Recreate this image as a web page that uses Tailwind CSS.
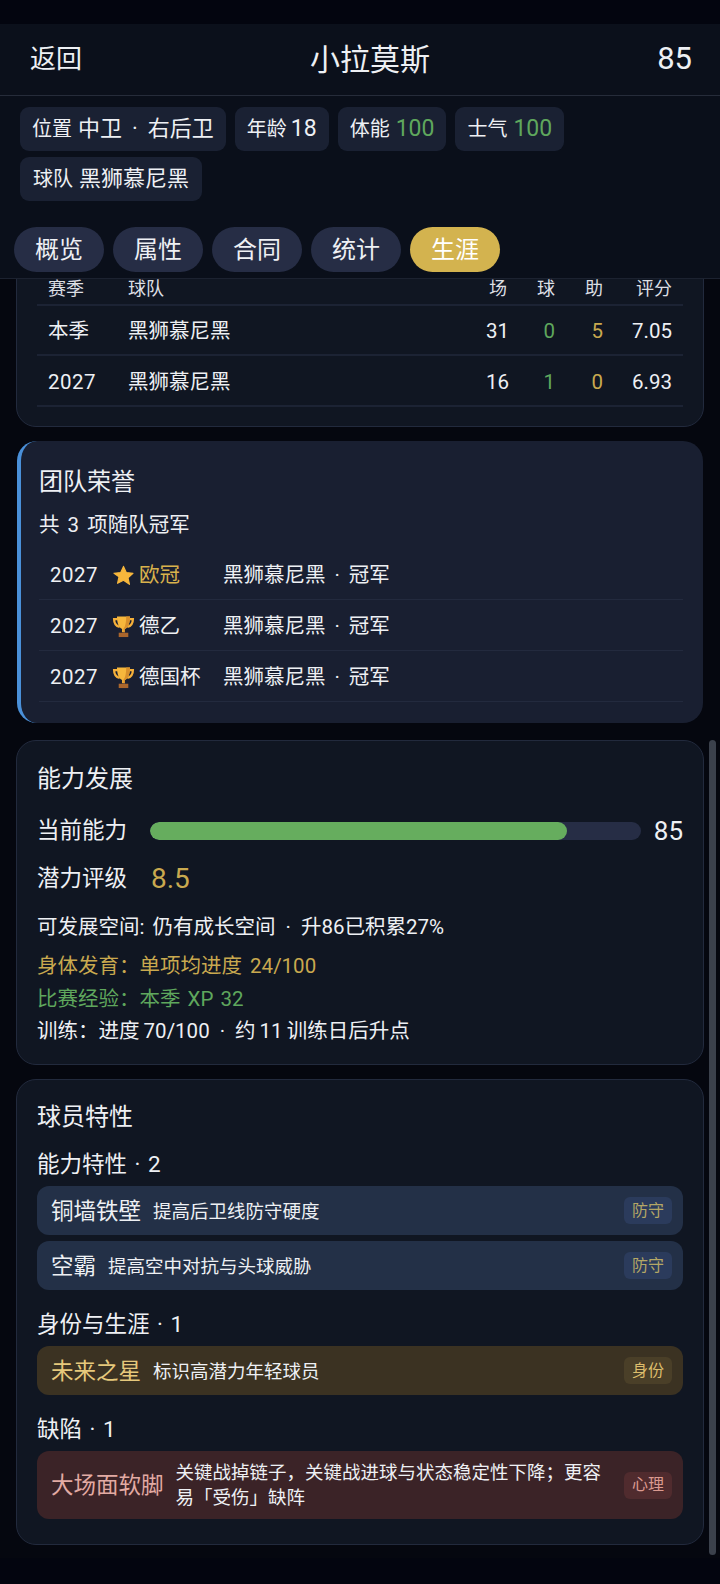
<!DOCTYPE html>
<html lang="zh-CN">
<head>
    <meta charset="UTF-8">
    <meta name="viewport" content="width=device-width, initial-scale=1.0">
    <title>小拉莫斯</title>
    <script src="https://cdn.jsdelivr.net/npm/@tailwindcss/browser@4"></script>
</head>
<body class="bg-[#05070f] text-[#eef0f4] font-['Roboto','Noto_Sans_CJK_SC',sans-serif] font-normal w-[720px] h-[1584px] overflow-hidden flex flex-col relative">

    <div class="h-[24px] shrink-0 bg-[#03050f]"></div>

    <header class="h-[72px] shrink-0 bg-[#0b101b] border-b border-[#262c3a] pl-[30px] pr-[28px] flex items-center justify-between">
        <span class="text-[26px] w-[80px]">返回</span>
        <span class="text-[30px]">小拉莫斯</span>
        <span class="text-[31px] w-[62px] text-right">85</span>
    </header>

    <section class="h-[183px] shrink-0 bg-[#0a0f1a] border-b border-[#1c2230] relative">
        <div class="flex flex-wrap gap-x-[9px] gap-y-[6px] px-[20px] pt-[11px] text-[20px] leading-[28px]">
            <span class="h-[44px] px-[12px] flex items-center rounded-[9px] bg-[#1a2133] gap-[6px]">位置 <b class="font-normal text-[22px]">中卫<span class="mx-[10px]">·</span>右后卫</b></span>
            <span class="h-[44px] px-[12px] flex items-center rounded-[9px] bg-[#1a2133] gap-[4px]">年龄 <b class="font-normal text-[23px]">18</b></span>
            <span class="h-[44px] px-[12px] flex items-center rounded-[9px] bg-[#1a2133] gap-[6px]">体能 <b class="font-normal text-[#5fa75d] text-[23px]">100</b></span>
            <span class="h-[44px] px-[12px] flex items-center rounded-[9px] bg-[#1a2133] gap-[6px]">士气 <b class="font-normal text-[#5fa75d] text-[23px]">100</b></span>
            <span class="h-[44px] px-[13px] flex items-center rounded-[9px] bg-[#1a2133] gap-[6px]">球队 <b class="font-normal text-[22px]">黑狮慕尼黑</b></span>
        </div>
        <nav class="flex gap-[9px] px-[14px] mt-[26px] text-[24px]">
            <span class="w-[90px] h-[45px] flex items-center justify-center rounded-full bg-[#262d45]">概览</span>
            <span class="w-[90px] h-[45px] flex items-center justify-center rounded-full bg-[#262d45]">属性</span>
            <span class="w-[90px] h-[45px] flex items-center justify-center rounded-full bg-[#262d45]">合同</span>
            <span class="w-[90px] h-[45px] flex items-center justify-center rounded-full bg-[#262d45]">统计</span>
            <span class="w-[90px] h-[45px] flex items-center justify-center rounded-full bg-[#d3b34f] text-white">生涯</span>
        </nav>
    </section>

    <main class="h-[1279px] shrink-0 overflow-hidden px-[16px]">
        <!-- career table, scrolled partly under the tabs -->
        <section class="-mt-[40px] h-[188px] border border-[#222a3d] rounded-[20px] bg-[#101622] px-[20px] pt-[34px]">
            <div class="grid grid-cols-[80px_1fr_48px_48px_48px_69px] h-[32px] pb-[2px] px-[11px] items-center border-b-2 border-[#1c2334] text-[18px] text-[#dcdfe4]">
                <span>赛季</span><span>球队</span><span class="text-right">场</span><span class="text-right">球</span><span class="text-right">助</span><span class="text-right">评分</span>
            </div>
            <div class="grid grid-cols-[80px_1fr_48px_48px_48px_69px] h-[50px] pt-[2px] px-[11px] items-center border-b-2 border-[#1c2334] text-[20.5px]">
                <span>本季</span><span>黑狮慕尼黑</span><span class="text-right -mr-[2px]">31</span><span class="text-right text-[#5fa75d]">0</span><span class="text-right text-[#c9a94f]">5</span><span class="text-right">7.05</span>
            </div>
            <div class="grid grid-cols-[80px_1fr_48px_48px_48px_69px] h-[51px] pt-[4px] px-[11px] items-center border-b-2 border-[#1c2334] text-[20.5px]">
                <span class="tracking-[0.5px]">2027</span><span>黑狮慕尼黑</span><span class="text-right -mr-[2px]">16</span><span class="text-right text-[#5fa75d]">1</span><span class="text-right text-[#c9a94f]">0</span><span class="text-right">6.93</span>
            </div>
        </section>

        <!-- team honours -->
        <section class="mt-[14px] h-[282px] ml-px mr-px rounded-[20px] border-l-4 border-[#4a90d9] bg-[#191f31] pl-[18px] pr-[20px] pt-[24px]">
            <h2 class="text-[24px] leading-[34px] font-normal">团队荣誉</h2>
            <p class="text-[20.5px] leading-[28px] mt-[12px] [word-spacing:3px]">共 3 项随队冠军</p>
            <div class="mt-[10px]">
                <div class="h-[51px] pt-[2px] flex items-center pl-[11px] border-b border-[#232a3e] text-[20.5px]">
                    <span class="w-[63px] tracking-[0.5px]">2027</span>
                    <svg class="w-[23px] h-[23px] mr-[4px] -ml-[1px]" viewBox="0 0 24 24"><path fill="#f7b73c" stroke="#f7b73c" stroke-width="1.200" stroke-linejoin="round" d="M12 2.500l2.900 6.400 7 .7-5.200 4.700 1.500 6.900L12 17l-6.200 3.200 1.500-6.900L2.100 9.600l7-.7z"/></svg>
                    <span class="w-[84px] text-[#d9b24c]">欧冠</span>
                    <span>黑狮慕尼黑<span class="mx-[9px]">·</span>冠军</span>
                </div>
                <div class="h-[51px] pt-[2px] flex items-center pl-[11px] border-b border-[#232a3e] text-[20.5px]">
                    <span class="w-[63px] tracking-[0.5px]">2027</span>
                    <svg class="w-[23px] h-[23px] mr-[4px] -ml-[1px]" viewBox="0 0 24 24"><path fill="none" stroke="#f5b03a" stroke-width="2.400" d="M6 4.200H2.200c0 4.300 1.800 7.300 5.800 8.300M18 4.200h3.800c0 4.300-1.800 7.300-5.800 8.300"/><path fill="#f7b73c" d="M5.200 1.500h13.600c0 6.500-1.700 11.500-5.300 13V18h-3v-3.500C6.900 13 5.200 8 5.200 1.500z"/><path fill="#d98f2b" d="M14.800 1.500h4c0 6.500-1.700 11.500-5.300 13V18H12v-4c2-2 2.800-6 2.800-12.500z"/><path fill="#a9652c" d="M7 18.500h10V23H7z"/></svg>
                    <span class="w-[84px]">德乙</span>
                    <span>黑狮慕尼黑<span class="mx-[9px]">·</span>冠军</span>
                </div>
                <div class="h-[51px] pt-[2px] flex items-center pl-[11px] border-b border-[#232a3e] text-[20.5px]">
                    <span class="w-[63px] tracking-[0.5px]">2027</span>
                    <svg class="w-[23px] h-[23px] mr-[4px] -ml-[1px]" viewBox="0 0 24 24"><path fill="none" stroke="#f5b03a" stroke-width="2.400" d="M6 4.200H2.200c0 4.300 1.800 7.300 5.800 8.300M18 4.200h3.800c0 4.300-1.800 7.300-5.800 8.300"/><path fill="#f7b73c" d="M5.200 1.500h13.600c0 6.500-1.700 11.500-5.300 13V18h-3v-3.500C6.900 13 5.200 8 5.200 1.500z"/><path fill="#d98f2b" d="M14.800 1.500h4c0 6.500-1.700 11.500-5.300 13V18H12v-4c2-2 2.800-6 2.800-12.500z"/><path fill="#a9652c" d="M7 18.500h10V23H7z"/></svg>
                    <span class="w-[84px]">德国杯</span>
                    <span>黑狮慕尼黑<span class="mx-[9px]">·</span>冠军</span>
                </div>
            </div>
        </section>

        <!-- ability -->
        <section class="mt-[17px] h-[325px] border border-[#222a3d] rounded-[20px] bg-[#101622] px-[20px] pt-[21px]">
            <h2 class="text-[24px] leading-[34px] font-normal">能力发展</h2>
            <div class="flex items-center mt-[18px] h-[34px]">
                <span class="text-[22.5px] w-[113px]">当前能力</span>
                <div class="w-[491px] h-[18px] rounded-full bg-[#262d45] overflow-hidden">
                    <div class="h-full rounded-full bg-[#66ad5e]" style="width: 85%"></div>
                </div>
                <span class="text-[26px] flex-1 text-right">85</span>
            </div>
            <div class="flex items-center mt-[14px] h-[34px]">
                <span class="text-[22.5px] w-[114px]">潜力评级</span>
                <span class="text-[28px] text-[#c9a94f]">8.5</span>
            </div>
            <p class="text-[20.5px] leading-[28px] mt-[17px] [word-spacing:3px]">可发展空间: 仍有成长空间<span class="mx-[10px]">·</span>升86已积累27%</p>
            <p class="text-[20.5px] leading-[28px] mt-[11px] text-[#c9a94f] [word-spacing:3px]">身体发育：单项均进度 24/100</p>
            <p class="text-[20.5px] leading-[28px] mt-[5px] text-[#5fa75d] [word-spacing:2px]">比赛经验：本季 XP 32</p>
            <p class="text-[20.5px] leading-[28px] mt-[4px] [word-spacing:-1px]">训练：进度 70/100<span class="mx-[10px]">·</span>约 11 训练日后升点</p>
        </section>

        <!-- traits -->
        <section class="mt-[14px] h-[466px] border border-[#222a3d] rounded-[20px] bg-[#101622] px-[20px] pt-[20px]">
            <h2 class="text-[24px] leading-[34px] font-normal">球员特性</h2>
            <h3 class="text-[22.5px] leading-[30px] font-normal mt-[15px] [word-spacing:2px]">能力特性 · 2</h3>
            <div class="mt-[7px] h-[49px] rounded-[12px] bg-[#233047] pl-[14px] pr-[11px] flex items-center">
                <span class="text-[22.5px] mr-[12px] mt-[2px]">铜墙铁壁</span>
                <span class="text-[18.5px] flex-1 mt-[4px]">提高后卫线防守硬度</span>
                <span class="h-[27px] px-[8px] flex items-center rounded-[6px] bg-[#2b3b5c] text-[16px] text-[#b5a766]">防守</span>
            </div>
            <div class="mt-[6px] h-[49px] rounded-[12px] bg-[#233047] pl-[14px] pr-[11px] flex items-center">
                <span class="text-[22.5px] mr-[12px] mt-[2px]">空霸</span>
                <span class="text-[18.5px] flex-1 mt-[4px]">提高空中对抗与头球威胁</span>
                <span class="h-[27px] px-[8px] flex items-center rounded-[6px] bg-[#2b3b5c] text-[16px] text-[#b5a766]">防守</span>
            </div>
            <h3 class="text-[22.5px] leading-[30px] font-normal mt-[19px] [word-spacing:2px]">身份与生涯 · 1</h3>
            <div class="mt-[7px] h-[49px] rounded-[12px] bg-[#3b3222] pl-[14px] pr-[11px] flex items-center">
                <span class="text-[22.5px] mr-[12px] mt-[2px] text-[#e6c97c]">未来之星</span>
                <span class="text-[18.5px] flex-1 mt-[4px]">标识高潜力年轻球员</span>
                <span class="h-[27px] px-[8px] flex items-center rounded-[6px] bg-[#4a3f28] text-[16px] text-[#dcbd6c]">身份</span>
            </div>
            <h3 class="text-[22.5px] leading-[30px] font-normal mt-[19px] [word-spacing:2px]">缺陷 · 1</h3>
            <div class="mt-[7px] h-[68px] rounded-[12px] bg-[#3b2327] pl-[14px] pr-[11px] flex items-center">
                <span class="text-[22.5px] mr-[12px] mt-[2px] text-[#e2aaa3] whitespace-nowrap">大场面软脚</span>
                <span class="text-[18.5px] leading-[25px] flex-1 pr-[14px] mt-[2px]">关键战掉链子，关键战进球与状态稳定性下降；更容易「受伤」缺阵</span>
                <span class="h-[27px] px-[8px] flex items-center rounded-[6px] bg-[#502b2e] text-[16px] text-[#dc9a90] whitespace-nowrap">心理</span>
            </div>
        </section>
    </main>

    <div class="flex-1 bg-[#03050f]"></div>

    <!-- scrollbar thumb over the list -->
    <div class="absolute left-[709px] top-[740px] w-[7px] h-[815px] rounded-full bg-[#3b414c]"></div>
</body>
</html>
